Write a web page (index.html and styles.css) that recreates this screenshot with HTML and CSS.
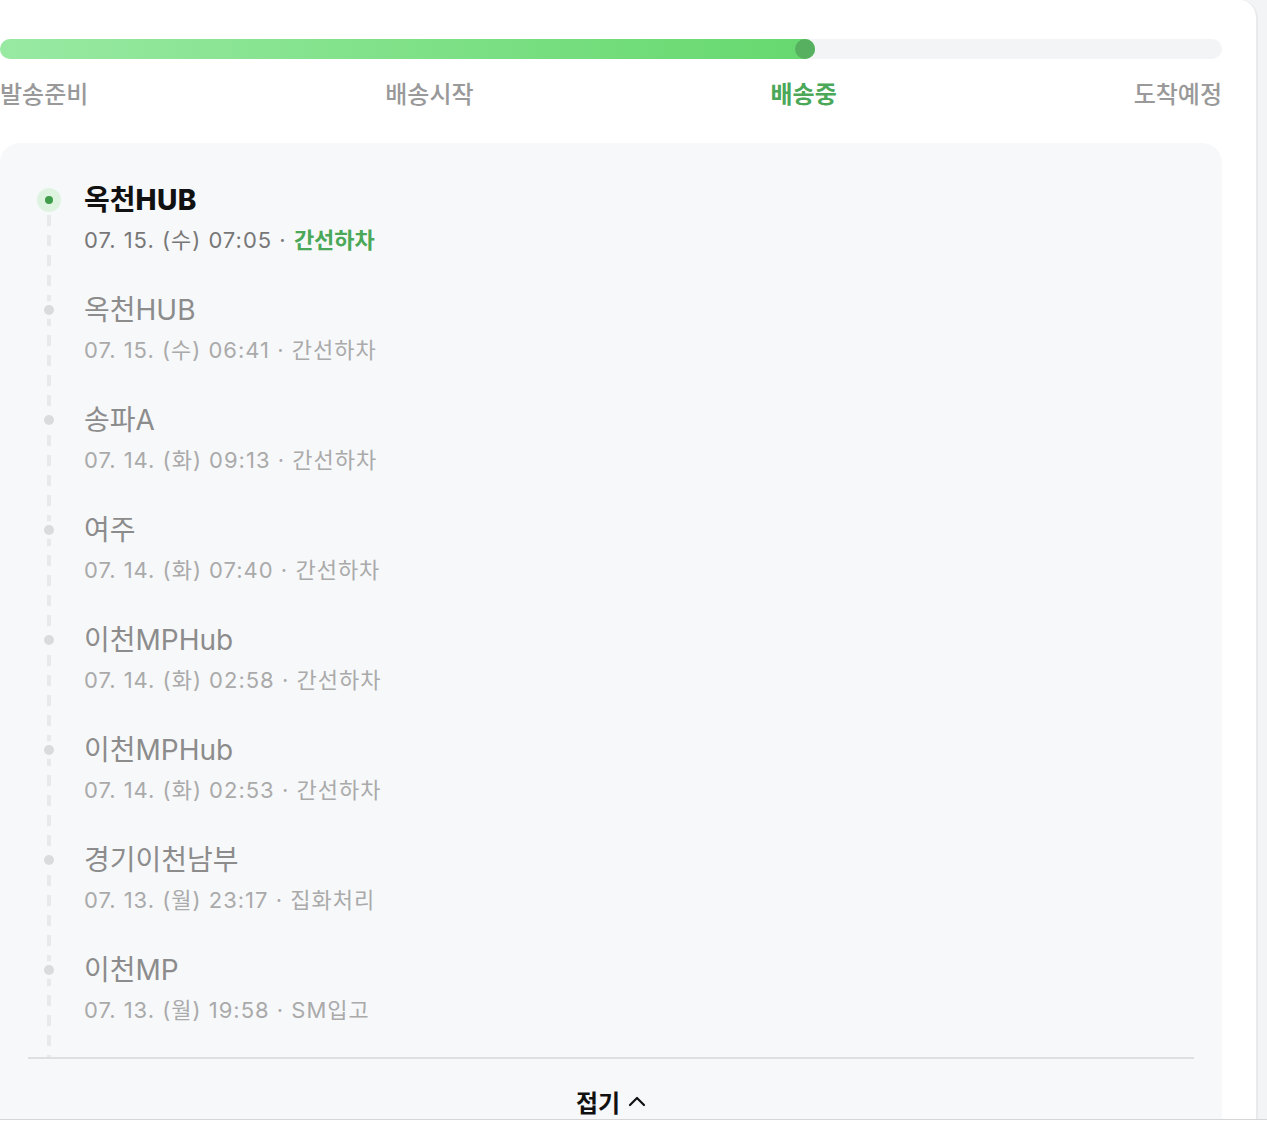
FILE: index.html
```html
<!DOCTYPE html>
<html>

<head>
    <title>배송조회</title>
    <link rel="stylesheet" href="styles.css">
</head>

<body>
    <div class="sheet">
        <div class="inner">
            <div class="progress">
                <div class="progress_fill" style="width: 815px;">
                    <span class="progress_knob"></span>
                </div>
            </div>

            <div class="steps">
                <span>발송준비</span>
                <span>배송시작</span>
                <span class="active">배송중</span>
                <span>도착예정</span>
            </div>

            <div class="panel">
                <ul class="track">
                    <li class="track_item current">
                        <span class="dot"></span>
                        <h3>옥천<b>HUB</b></h3>
                        <p>07. 15. (수) 07:05 · <em>간선하차</em></p>
                    </li>
                    <li class="track_item">
                        <span class="dot"></span>
                        <h3>옥천HUB</h3>
                        <p>07. 15. (수) 06:41 · 간선하차</p>
                    </li>
                    <li class="track_item">
                        <span class="dot"></span>
                        <h3>송파A</h3>
                        <p>07. 14. (화) 09:13 · 간선하차</p>
                    </li>
                    <li class="track_item">
                        <span class="dot"></span>
                        <h3>여주</h3>
                        <p>07. 14. (화) 07:40 · 간선하차</p>
                    </li>
                    <li class="track_item">
                        <span class="dot"></span>
                        <h3>이천MPHub</h3>
                        <p>07. 14. (화) 02:58 · 간선하차</p>
                    </li>
                    <li class="track_item">
                        <span class="dot"></span>
                        <h3>이천MPHub</h3>
                        <p>07. 14. (화) 02:53 · 간선하차</p>
                    </li>
                    <li class="track_item">
                        <span class="dot"></span>
                        <h3>경기이천남부</h3>
                        <p>07. 13. (월) 23:17 · 집화처리</p>
                    </li>
                    <li class="track_item">
                        <span class="dot"></span>
                        <h3>이천MP</h3>
                        <p>07. 13. (월) 19:58 · SM입고</p>
                    </li>
                </ul>

                <button class="fold">접기
                    <svg width="18" height="12" viewBox="0 0 18 12">
                        <path d="M2 10 L9 3 L16 10" fill="none" stroke="#111" stroke-width="2.2" stroke-linecap="round" stroke-linejoin="round" />
                    </svg>
                </button>
            </div>
        </div>
    </div>
    <div class="bottom-bar"></div>
</body>

</html>
```

FILE: styles.css
```css
/* 배송조회 */
* {
    margin: 0;
    padding: 0;
    box-sizing: border-box;
}

body {
    background: #f3f4f5;
    font-family: "Inter", "Noto Sans CJK KR", sans-serif;
    overflow: hidden;
}

.sheet {
    width: 1258px;
    background: #fff;
    border-top-right-radius: 18px;
    border-right: 2px solid #e9eaeb;
    padding-top: 39px;
}

.inner {
    width: 1222px;
}

/* progress */
.progress {
    height: 20px;
    border-radius: 10px;
    background: #f3f4f5;
}

.progress_fill {
    position: relative;
    height: 20px;
    border-radius: 10px;
    background: linear-gradient(90deg, #98e9a2, #66d86e);
}

.progress_knob {
    position: absolute;
    right: 0;
    top: 0;
    width: 20px;
    height: 20px;
    border-radius: 50%;
    background: #56b05f;
}

.steps {
    display: flex;
    justify-content: space-between;
    margin-top: 20px;
    font-size: 24px;
    line-height: 32px;
    font-weight: 500;
    color: #999;
}

.steps .active {
    color: #4aa858;
    font-weight: 700;
}

/* timeline panel */
.panel {
    margin-top: 32px;
    background: #f7f8fa;
    border-radius: 20px 20px 0 0;
    padding: 0 28px;
}

.track {
    position: relative;
    list-style: none;
    padding-top: 39px;
    border-bottom: 2px solid #dedfe1;
}

.track::before {
    content: "";
    position: absolute;
    left: 19px;
    top: 72px;
    bottom: 0;
    width: 4px;
    background: repeating-linear-gradient(180deg, #e8e9eb 0 11px, transparent 11px 20px);
}

.track_item {
    position: relative;
    height: 110px;
    padding-left: 56px;
}

.track_item:last-child {
    height: 105px;
}

.track_item .dot {
    position: absolute;
    left: 16px;
    top: 13px;
    width: 10px;
    height: 10px;
    border-radius: 50%;
    background: #dadbdd;
    box-shadow: 0 0 0 4px #f7f8fa;
}

.track_item.current .dot {
    left: 9px;
    top: 6px;
    width: 24px;
    height: 24px;
    background: #def4e1;
    box-shadow: none;
}

.track_item.current .dot::after {
    content: "";
    position: absolute;
    left: 8px;
    top: 8px;
    width: 8px;
    height: 8px;
    border-radius: 50%;
    background: #3f9d4b;
}

.track_item h3 {
    font-size: 28px;
    line-height: 36px;
    font-weight: 400;
    color: #8c8c8c;
}

.track_item p {
    margin-top: 7px;
    font-size: 22px;
    line-height: 30px;
    letter-spacing: 1px;
    color: #aaa;
}

.track_item.current h3 {
    color: #111;
    font-weight: 700;
}

.track_item.current h3 b {
    font-weight: 800;
    letter-spacing: 0.4px;
}

.track_item.current p {
    color: #777;
}

.track_item.current p em {
    font-style: normal;
    font-weight: 700;
    letter-spacing: 0;
    color: #4aa858;
}

.fold {
    display: flex;
    align-items: center;
    justify-content: center;
    gap: 8px;
    width: 100%;
    height: 60px;
    padding-top: 24px;
    border: none;
    background: none;
    font-family: inherit;
    font-size: 24px;
    font-weight: 700;
    color: #111;
}

.bottom-bar {
    height: 14px;
    background: #fff;
    border-top: 1px solid #d6d6d6;
}
```
